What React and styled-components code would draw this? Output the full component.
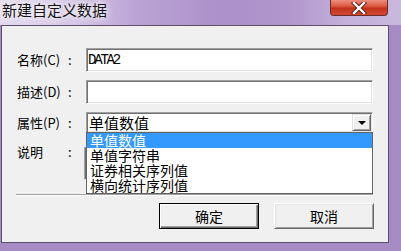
import React from 'react';
import styled, { createGlobalStyle } from 'styled-components';

const GlobalStyle = createGlobalStyle`
  html, body { margin: 0; padding: 0; background: #a78bc5; }
  body { width: 401px; height: 251px; overflow: hidden; }
  * { box-sizing: border-box; }
`;

const listItems = ['单值数值', '单值字符串', '证券相关序列值', '横向统计序列值'];

const Window = styled.div`
  width: 401px;
  height: 251px;
  display: flex;
  flex-direction: column;
  background: #a78bc5;
  font-family: "Noto Sans CJK SC", sans-serif;
`;

const TitleBar = styled.div`
  height: 25px;
  flex: none;
  display: flex;
  align-items: flex-start;
  background: linear-gradient(90deg, #e4dbee 0%, #d6c8e5 18%, #bba3d5 34%, #ac91ca 55%, #b096cc 72%, #c3afda 86%, #c9b8dd 100%);
`;

const Title = styled.div`
  padding: 0 0 0 2px;
  font-size: 15px;
  line-height: 20px;
  color: #141414;
  text-shadow: 0 0 5px #fff, 0 0 9px #fff;
`;

const CloseButton = styled.div`
  margin-left: auto;
  margin-right: 13px;
  width: 58px;
  height: 16px;
  border: 1px solid #6e2a2a;
  border-top: none;
  border-radius: 0 0 4px 4px;
  background: linear-gradient(#eb8e7b 0%, #dd5a42 40%, #c4311d 55%, #d24a33 100%);
  display: flex;
  align-items: center;
  justify-content: center;
`;

const Body = styled.div`
  flex: 1;
  display: flex;
  padding: 0 12px 8px 1px;
`;

const Client = styled.div`
  flex: 1;
  display: flex;
  flex-direction: column;
  background: #f0f0f0;
  border: 1px solid #5d4d6e;
  padding: 22px 15px 0 15px;
`;

const Row = styled.div`
  display: grid;
  grid-template-columns: 69px 1fr;
  align-items: ${p => (p.top ? 'start' : 'center')};
  margin-top: ${p => p.gap || 0}px;
`;

const Label = styled.div`
  display: flex;
  font-size: 13px;
  line-height: 16px;
  color: #000;
  margin-top: ${p => p.shift || 0}px;
`;

const LabelName = styled.span`
  width: 51px;
`;

const Sunken = styled.div`
  position: relative;
  height: ${p => p.h}px;
  margin-left: ${p => p.ml || 0}px;
  background: #fff;
  border: 1px solid;
  border-color: #a0a0a0 #fff #fff #a0a0a0;
  box-shadow: inset 1px 1px 0 #707070, inset -1px -1px 0 #e3e3e3;
  display: flex;
  align-items: center;
`;

const InputText = styled.span`
  padding-left: 1px;
  font-family: "Liberation Mono", "Noto Sans CJK SC", monospace;
  font-size: 14px;
  letter-spacing: -2.2px;
  color: #000;
`;

const SelectText = styled.span`
  flex: 1;
  padding-left: 2px;
  font-size: 15px;
  line-height: 17px;
  color: #000;
`;

const DropButton = styled.div`
  width: 19px;
  height: 17px;
  margin-right: 1px;
  background: #f0f0f0;
  border: 1px solid;
  border-color: #e3e3e3 #696969 #696969 #e3e3e3;
  box-shadow: inset 1px 1px 0 #fff, inset -1px -1px 0 #a0a0a0;
  display: flex;
  align-items: center;
  justify-content: center;
`;

const Arrow = styled.div`
  width: 0;
  height: 0;
  border-left: 4px solid transparent;
  border-right: 4px solid transparent;
  border-top: 4px solid #000;
`;

const DropList = styled.div`
  position: absolute;
  top: 100%;
  left: -1px;
  right: -1px;
  z-index: 2;
  background: #fff;
  border: 1px solid #646464;
`;

const ListItem = styled.div`
  height: 15px;
  line-height: 15px;
  padding-left: 3px;
  font-size: 14px;
  color: ${p => (p.active ? '#fff' : '#000')};
  background: ${p => (p.active ? '#3399ff' : 'transparent')};
  white-space: nowrap;
`;

const Separator = styled.div`
  margin: 14px 0 0 -1px;
  height: 2px;
  border-top: 1px solid #a0a0a0;
  border-bottom: 1px solid #fff;
`;

const ButtonRow = styled.div`
  display: flex;
  justify-content: flex-end;
  gap: 15px;
  margin: 7px -1px 0 0;
`;

const Button = styled.div`
  width: ${p => p.w}px;
  height: 26px;
  display: flex;
  align-items: center;
  justify-content: center;
  font-size: 14px;
  color: #000;
  background: #f0f0f0;
  border: 1px solid;
  border-color: ${p => (p.primary ? '#000' : '#fff #696969 #696969 #fff')};
  box-shadow: ${p =>
    p.primary
      ? 'inset 1px 1px 0 #fff, inset -1px -1px 0 #696969, inset -2px -2px 0 #a0a0a0'
      : 'inset 1px 1px 0 #e3e3e3, inset -1px -1px 0 #a0a0a0'};
`;

const App = () => (
  <>
    <GlobalStyle />
    <Window>
      <TitleBar>
        <Title>新建自定义数据</Title>
        <CloseButton>
          <svg width="16" height="12" viewBox="0 0 16 12">
            <path d="M3 1 L13 11 M13 1 L3 11" stroke="#5a1a14" strokeWidth="4.2" strokeLinecap="square" />
            <path d="M3 1 L13 11 M13 1 L3 11" stroke="#fff" strokeWidth="2.4" strokeLinecap="square" />
          </svg>
        </CloseButton>
      </TitleBar>
      <Body>
        <Client>
          <Row>
            <Label><LabelName>名称(C)</LabelName>:</Label>
            <Sunken h={24}><InputText>DATA2</InputText></Sunken>
          </Row>
          <Row gap={8}>
            <Label><LabelName>描述(D)</LabelName>:</Label>
            <Sunken h={24} />
          </Row>
          <Row gap={8}>
            <Label><LabelName>属性(P)</LabelName>:</Label>
            <Sunken h={21}>
              <SelectText>单值数值</SelectText>
              <DropButton><Arrow /></DropButton>
              <DropList>
                {listItems.map((item, i) => (
                  <ListItem key={item} active={i === 0}>{item}</ListItem>
                ))}
              </DropList>
            </Sunken>
          </Row>
          <Row gap={14} top>
            <Label shift={-3}><LabelName>说明</LabelName>:</Label>
            <Sunken h={33} ml={-2} />
          </Row>
          <Separator />
          <ButtonRow>
            <Button w={100} primary>确定</Button>
            <Button w={100}>取消</Button>
          </ButtonRow>
        </Client>
      </Body>
    </Window>
  </>
);

export default App;
